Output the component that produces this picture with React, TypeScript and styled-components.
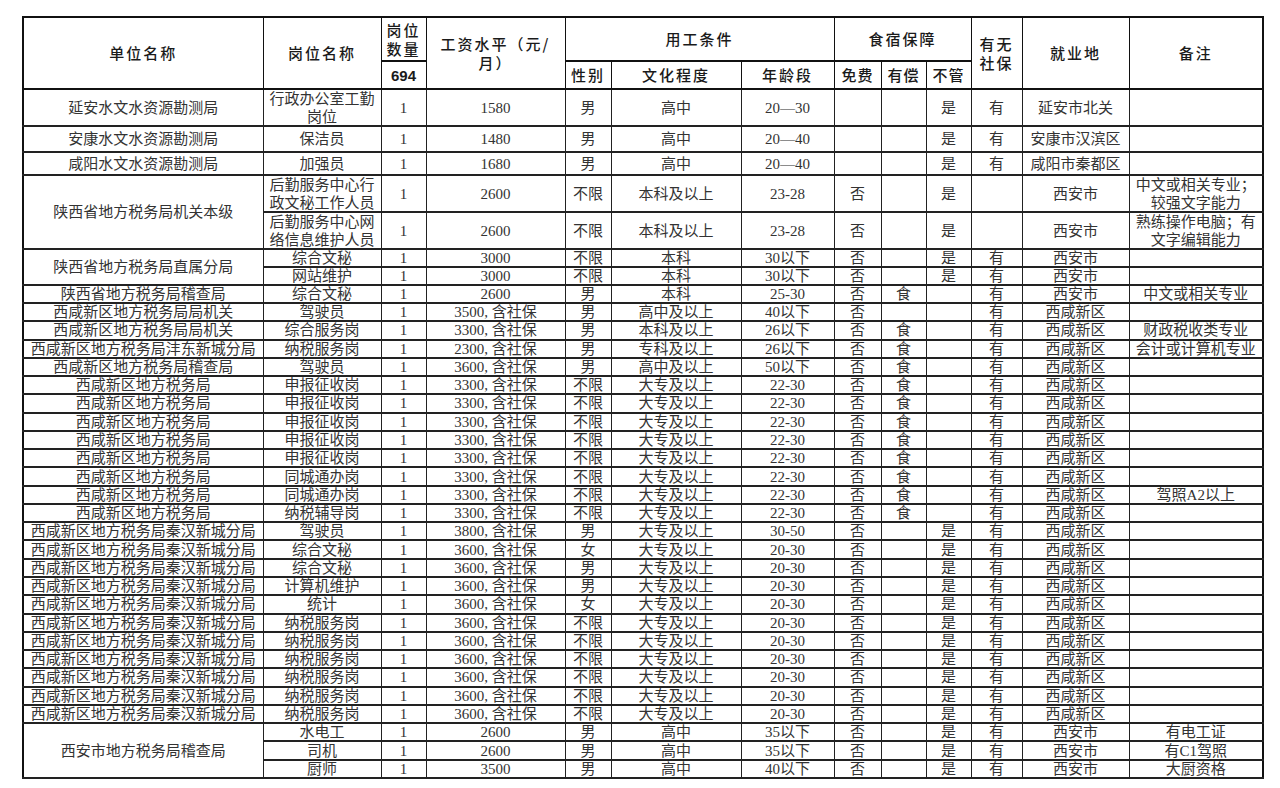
import styled, { createGlobalStyle } from 'styled-components';

const GlobalStyle = createGlobalStyle`
  html, body {
    margin: 0;
    background: #fff;
  }
  body {
    font-family: "Liberation Serif", "Noto Sans CJK SC", serif;
  }
`;

interface Job {
  pos: string;
  n: string;
  pay: string;
  sex: string;
  edu: string;
  age: string;
  free: string;
  paid: string;
  none: string;
  ins: string;
  place: string;
  note: string;
}

interface Group {
  unit: string;
  h: number;
  jobs: Job[];
}

const j = (
  pos: string,
  pay: string,
  sex: string,
  edu: string,
  age: string,
  free: string,
  paid: string,
  none: string,
  ins: string,
  place: string,
  note = '',
): Job => ({ pos, n: '1', pay, sex, edu, age, free, paid, none, ins, place, note });

const XX = '西咸新区地方税务局';
const QH = '西咸新区地方税务局秦汉新城分局';
const R = 18.27;

const groups: Group[] = [
  { unit: '延安水文水资源勘测局', h: 37, jobs: [j('行政办公室工勤岗位', '1580', '男', '高中', '20—30', '', '', '是', '有', '延安市北关')] },
  { unit: '安康水文水资源勘测局', h: 26, jobs: [j('保洁员', '1480', '男', '高中', '20—40', '', '', '是', '有', '安康市汉滨区')] },
  { unit: '咸阳水文水资源勘测局', h: 23, jobs: [j('加强员', '1680', '男', '高中', '20—40', '', '', '是', '有', '咸阳市秦都区')] },
  {
    unit: '陕西省地方税务局机关本级',
    h: 37,
    jobs: [
      j('后勤服务中心行政文秘工作人员', '2600', '不限', '本科及以上', '23-28', '否', '', '是', '', '西安市', '中文或相关专业；较强文字能力'),
      j('后勤服务中心网络信息维护人员', '2600', '不限', '本科及以上', '23-28', '否', '', '是', '', '西安市', '熟练操作电脑；有文字编辑能力'),
    ],
  },
  {
    unit: '陕西省地方税务局直属分局',
    h: 18,
    jobs: [
      j('综合文秘', '3000', '不限', '本科', '30以下', '否', '', '是', '有', '西安市'),
      j('网站维护', '3000', '不限', '本科', '30以下', '否', '', '是', '有', '西安市'),
    ],
  },
  { unit: '陕西省地方税务局稽查局', h: 18, jobs: [j('综合文秘', '2600', '男', '本科', '25-30', '否', '食', '', '有', '西安市', '中文或相关专业')] },
  { unit: '西咸新区地方税务局局机关', h: R, jobs: [j('驾驶员', '3500, 含社保', '男', '高中及以上', '40以下', '否', '', '', '有', '西咸新区')] },
  { unit: '西咸新区地方税务局局机关', h: R, jobs: [j('综合服务岗', '3300, 含社保', '男', '本科及以上', '26以下', '否', '食', '', '有', '西咸新区', '财政税收类专业')] },
  { unit: '西咸新区地方税务局沣东新城分局', h: R, jobs: [j('纳税服务岗', '2300, 含社保', '男', '专科及以上', '26以下', '否', '食', '', '有', '西咸新区', '会计或计算机专业')] },
  { unit: '西咸新区地方税务局稽查局', h: R, jobs: [j('驾驶员', '3600, 含社保', '男', '高中及以上', '50以下', '否', '食', '', '有', '西咸新区')] },
  ...['申报征收岗', '申报征收岗', '申报征收岗', '申报征收岗', '申报征收岗', '同城通办岗', '同城通办岗', '纳税辅导岗'].map(
    (pos, i): Group => ({
      unit: XX,
      h: R,
      jobs: [j(pos, '3300, 含社保', '不限', '大专及以上', '22-30', '否', '食', '', '有', '西咸新区', i === 6 ? '驾照A2以上' : '')],
    }),
  ),
  { unit: QH, h: R, jobs: [j('驾驶员', '3800, 含社保', '男', '大专及以上', '30-50', '否', '', '是', '有', '西咸新区')] },
  ...[
    ['综合文秘', '女'],
    ['综合文秘', '男'],
    ['计算机维护', '男'],
    ['统计', '女'],
    ['纳税服务岗', '不限'],
    ['纳税服务岗', '不限'],
    ['纳税服务岗', '不限'],
    ['纳税服务岗', '不限'],
    ['纳税服务岗', '不限'],
    ['纳税服务岗', '不限'],
  ].map(([pos, sex]): Group => ({
    unit: QH,
    h: R,
    jobs: [j(pos, '3600, 含社保', sex, '大专及以上', '20-30', '否', '', '是', '有', '西咸新区')],
  })),
  {
    unit: '西安市地方税务局稽查局',
    h: R,
    jobs: [
      j('水电工', '2600', '男', '高中', '35以下', '否', '', '是', '有', '西安市', '有电工证'),
      j('司机', '2600', '男', '高中', '35以下', '否', '', '是', '有', '西安市', '有C1驾照'),
      j('厨师', '3500', '男', '高中', '40以下', '否', '', '是', '有', '西安市', '大厨资格'),
    ],
  },
];

const widths = [240, 118, 45, 139, 46, 130, 93, 47, 45, 45, 51, 107, 134];

function Field({ h, wrap, children }: { h: number; wrap?: boolean; children: React.ReactNode }) {
  return (
    <Cell>
      <Inner $h={h - 2} $wrap={wrap}>
        <span>{children}</span>
      </Inner>
    </Cell>
  );
}

export default function App() {
  return (
    <>
      <GlobalStyle />
      <Page>
        <Sheet>
          <colgroup>
            {widths.map((w, i) => (
              <col key={i} style={{ width: w }} />
            ))}
          </colgroup>
          <thead>
            <HeadRow $h={44}>
              <Th rowSpan={2}>单位名称</Th>
              <Th rowSpan={2}>岗位名称</Th>
              <Th $tight>
                岗位
                <br />
                数量
              </Th>
              <Th rowSpan={2} $tight>
                工资水平（元/
                <br />
                月）
              </Th>
              <Th colSpan={3}>用工条件</Th>
              <Th colSpan={3}>食宿保障</Th>
              <Th rowSpan={2} $tight>
                有无
                <br />
                社保
              </Th>
              <Th rowSpan={2}>就业地</Th>
              <Th rowSpan={2}>备注</Th>
            </HeadRow>
            <HeadRow $h={28}>
              <Total>694</Total>
              <Th>性别</Th>
              <Th>文化程度</Th>
              <Th>年龄段</Th>
              <Th $small>免费</Th>
              <Th $small>有偿</Th>
              <Th $small>不管</Th>
            </HeadRow>
          </thead>
          <tbody>
            {groups.map((g, gi) =>
              g.jobs.map((job, ji) => (
                <tr key={`${gi}-${ji}`}>
                  {ji === 0 && (
                    <Cell rowSpan={g.jobs.length}>
                      <Inner $h={g.h * g.jobs.length - 2}>
                        <span>{g.unit}</span>
                      </Inner>
                    </Cell>
                  )}
                  <Field h={g.h} wrap>
                    {job.pos}
                  </Field>
                  <Field h={g.h}>{job.n}</Field>
                  <Field h={g.h}>{job.pay}</Field>
                  <Field h={g.h}>{job.sex}</Field>
                  <Field h={g.h}>{job.edu}</Field>
                  <Field h={g.h}>{job.age}</Field>
                  <Field h={g.h}>{job.free}</Field>
                  <Field h={g.h}>{job.paid}</Field>
                  <Field h={g.h}>{job.none}</Field>
                  <Field h={g.h}>{job.ins}</Field>
                  <Field h={g.h}>{job.place}</Field>
                  <Field h={g.h} wrap>
                    {job.note}
                  </Field>
                </tr>
              )),
            )}
          </tbody>
        </Sheet>
      </Page>
    </>
  );
}

const Page = styled.div`
  padding: 16px 0 0 22px;
`;

const Sheet = styled.table`
  width: 1240px;
  table-layout: fixed;
  border-collapse: collapse;
  border: 2px solid #111;
  font-family: "Liberation Serif", "Noto Sans CJK SC", serif;
  font-size: 15px;
  color: #333;
`;

const HeadRow = styled.tr<{ $h: number }>`
  height: ${(p) => p.$h}px;
`;

const Th = styled.th<{ $tight?: boolean; $small?: boolean }>`
  padding: 0;
  border: 1px solid #111;
  border-bottom-width: 2px;
  font-family: "Noto Sans CJK SC", sans-serif;
  font-weight: 500;
  font-size: 15px;
  line-height: ${(p) => (p.$tight ? '19px' : '20px')};
  letter-spacing: ${(p) => (p.$small ? '1px' : '2px')};
  color: #1a1a1a;
  text-align: center;
  vertical-align: middle;
  white-space: nowrap;
`;

const Total = styled.th`
  padding: 0;
  border: 1px solid #111;
  border-bottom-width: 2px;
  font-family: "Liberation Sans", sans-serif;
  font-weight: 700;
  font-size: 15px;
  color: #1a1a1a;
  text-align: center;
`;

const Cell = styled.td`
  padding: 0 2px;
  border-left: 1px solid #222;
  border-right: 1px solid #222;
  border-top: 2px solid #222;
  border-bottom: 2px solid #222;
  vertical-align: middle;
`;

const Inner = styled.div<{ $h: number; $wrap?: boolean }>`
  height: ${(p) => p.$h}px;
  display: flex;
  align-items: center;
  justify-content: center;
  text-align: center;
  line-height: ${(p) => (p.$wrap ? '18px' : '16px')};
  white-space: ${(p) => (p.$wrap ? 'normal' : 'nowrap')};
`;
